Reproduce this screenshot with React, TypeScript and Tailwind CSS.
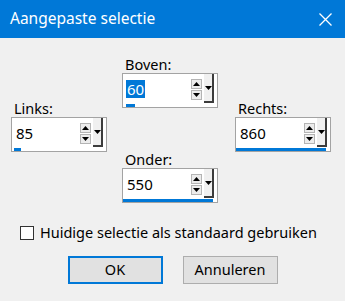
import { ReactNode } from "react";

interface SpinFieldProps {
  label: string;
  value: string;
  barClass: string;
  selected?: boolean;
}

function Arrow({ up }: { up?: boolean }) {
  return (
    <svg width="7" height="4" viewBox="0 0 7 4">
      {up ? <path d="M0 4h7L3.5 0z" fill="#000" /> : <path d="M0 0h7L3.5 4z" fill="#000" />}
    </svg>
  );
}

function SpinButton({ children }: { children: ReactNode }) {
  return (
    <div className="flex h-[10px] w-[11px] items-center justify-center border border-[#b4b4b4] bg-[#ececec]">
      {children}
    </div>
  );
}

function SpinField({ label, value, barClass, selected }: SpinFieldProps) {
  return (
    <div className="flex w-[96px] flex-col">
      <span className="pl-[3px] text-[14.5px] leading-[16px] text-black">{label}</span>
      <div className="mt-[1px] flex h-[35px] flex-col border border-[#a3a3a3] bg-white">
        <div className="flex flex-1 items-center">
          <span
            className={`ml-[3px] px-[1px] text-[15px] leading-[18px] ${
              selected ? "bg-[#0078d7] text-white" : "text-black"
            }`}
          >
            {value}
          </span>
          <div className="ml-auto flex flex-col gap-[1px]">
            <SpinButton>
              <Arrow up />
            </SpinButton>
            <SpinButton>
              <Arrow />
            </SpinButton>
          </div>
          <div className="ml-[2px] mr-[3px] flex h-[29px] w-[10px] items-center justify-center self-start border-b-2 border-r-2 border-[#3c3c3c] bg-[#f0f0f0]">
            <Arrow />
          </div>
        </div>
        <div className={`h-[3px] bg-[#0078d7] ${barClass}`} />
      </div>
    </div>
  );
}

export default function App() {
  return (
    <div
      className="flex h-[301px] w-[345px] flex-col bg-[#f0f0f0]"
      style={{ fontFamily: '"Noto Sans", "Open Sans", sans-serif' }}
    >
      <div className="flex h-[38px] items-center bg-[#0078d7] pl-[10px] pr-[13px] text-white">
        <span className="text-[15.5px]">Aangepaste selectie</span>
        <svg className="ml-auto" width="13" height="13" viewBox="0 0 13 13">
          <path d="M0.5 0.5l12 12M12.5 0.5l-12 12" stroke="#fff" strokeWidth="1.3" />
        </svg>
      </div>

      <div className="flex pl-[11px] pt-[18px]">
        <div className="pt-[44px]">
          <SpinField label="Links:" value="85" barClass="w-[7px] ml-[2px]" />
        </div>
        <div className="ml-[15px] flex flex-col gap-[43px]">
          <SpinField label="Boven:" value="60" barClass="w-[9px] ml-[3px]" selected />
          <SpinField label="Onder:" value="550" barClass="mr-[4px]" />
        </div>
        <div className="ml-[17px] pt-[44px]">
          <SpinField label="Rechts:" value="860" barClass="mr-[4px]" />
        </div>
      </div>

      <div className="mt-[19px] flex items-center pl-[20px]">
        <div className="h-[14px] w-[14px] border border-[#333] bg-white" />
        <span className="ml-[6px] text-[14.5px] text-black">Huidige selectie als standaard gebruiken</span>
      </div>

      <div className="mt-[12px] flex justify-center gap-[20px]">
        <button className="h-[28px] w-[95px] border-2 border-[#0078d7] bg-[#e1e1e1] text-[14.5px] text-black">
          OK
        </button>
        <button className="h-[28px] w-[95px] border border-[#adadad] bg-[#e1e1e1] text-[14.5px] text-black">
          Annuleren
        </button>
      </div>
    </div>
  );
}
